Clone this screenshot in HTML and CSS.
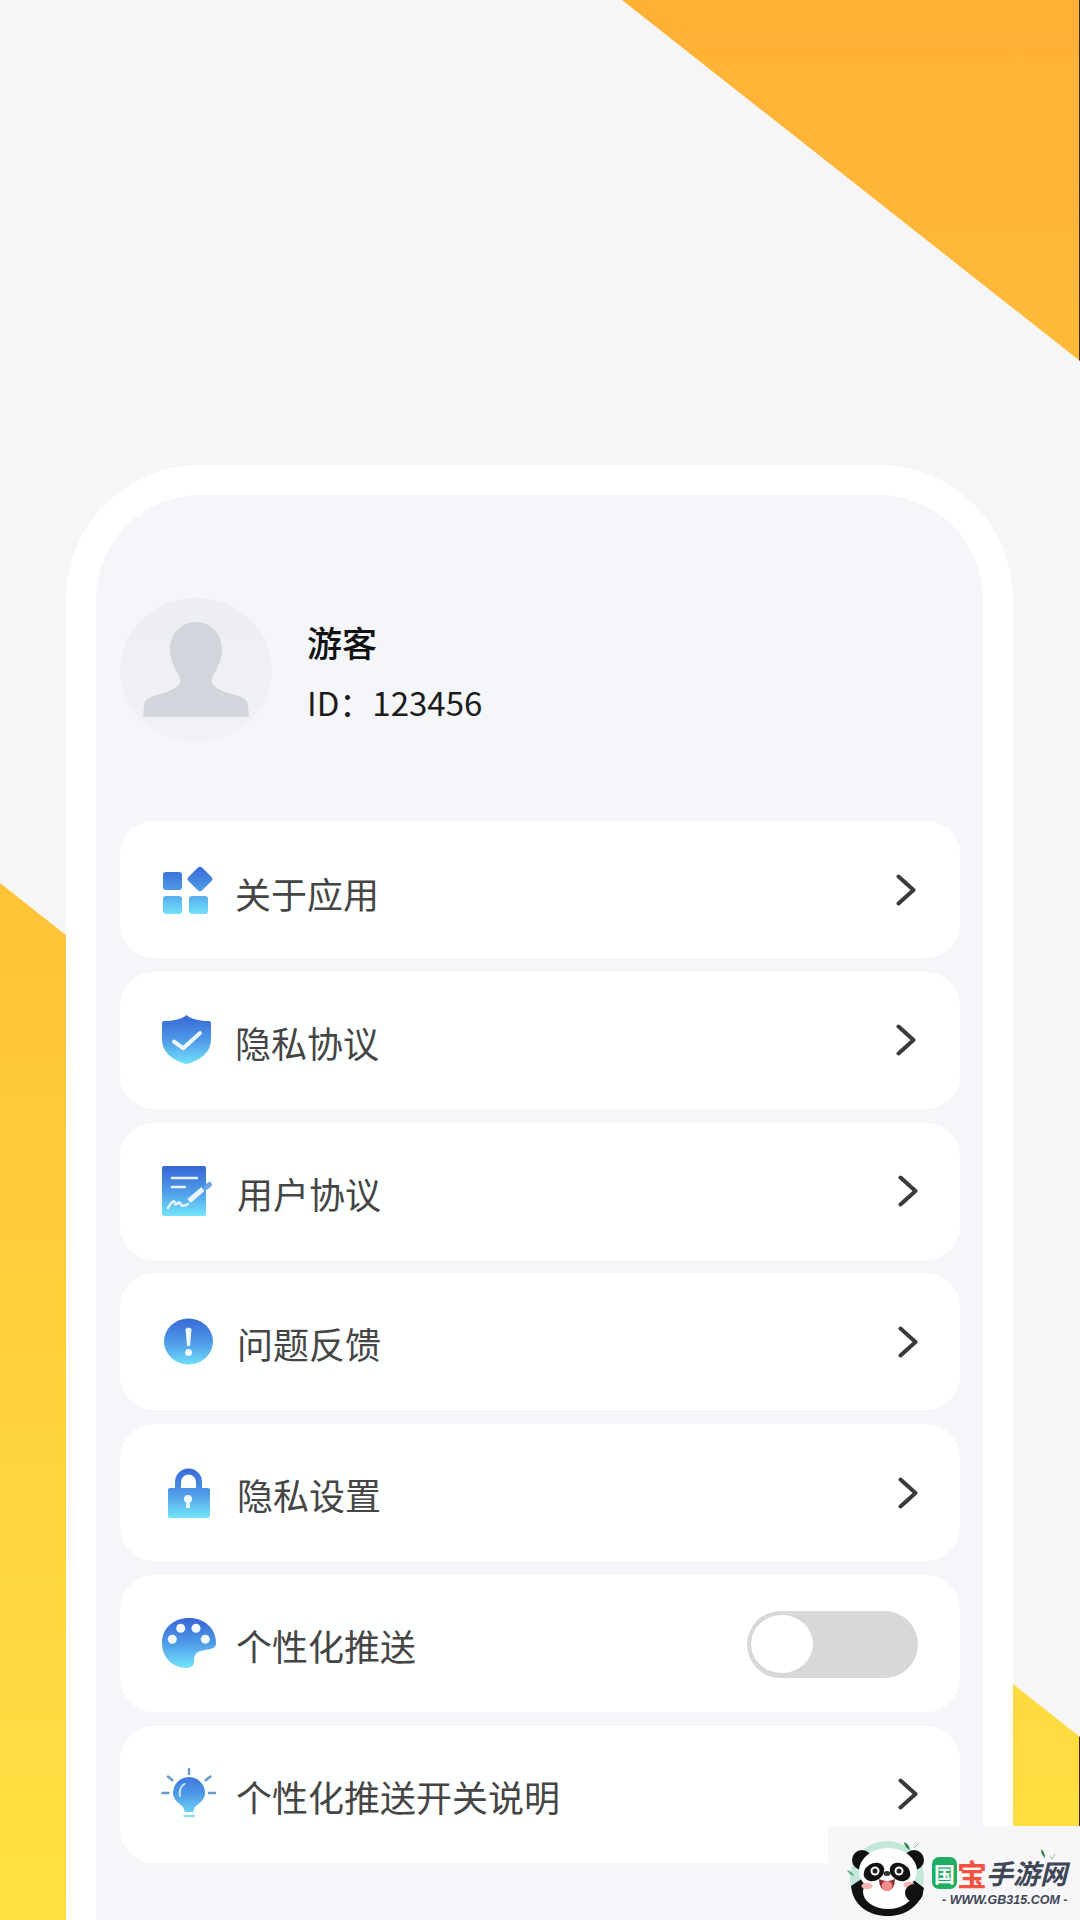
FILE: index.html
```html
<!DOCTYPE html>
<html lang="zh-CN">
<head>
    <meta charset="UTF-8">
    <meta name="viewport" content="width=device-width, initial-scale=1.0">
    <title>我的</title>
    <link rel="stylesheet" href="styles.css">
</head>
<body>
    <div class="deco deco-top"></div>
    <div class="deco deco-low"></div>

    <svg class="svg-defs" width="0" height="0">
        <defs>
            <linearGradient id="iconBlue" gradientUnits="userSpaceOnUse" x1="0" y1="4" x2="0" y2="53">
                <stop offset="0" stop-color="#3768d6"/>
                <stop offset="0.5" stop-color="#4f9be8"/>
                <stop offset="1" stop-color="#74e4fb"/>
            </linearGradient>
        </defs>
    </svg>

    <main class="phone">
        <section class="profile">
            <div class="avatar">
                <svg width="150" height="144" viewBox="0 1 150 144">
                    <path fill="#d2d6dc" d="M76 25C91 25 102 37 102 52C102 65 95 75 92 81C90 87 95 91 105 95C118 99 127 100 128 108L129 120H23L24 108C25 100 34 99 47 95C57 91 62 87 60 81C57 75 50 65 50 52C50 37 61 25 76 25Z"/>
                </svg>
            </div>
            <div class="profile-text">
                <div class="profile-name">游客</div>
                <div class="profile-id">ID：123456</div>
            </div>
        </section>

        <section class="menu">
            <div class="row row-first">
                <svg class="icon" viewBox="0 0 56 56">
                    <g fill="url(#iconBlue)">
                        <rect x="3" y="10" width="19" height="18" rx="3"/>
                        <rect x="3" y="34" width="19" height="18" rx="3"/>
                        <rect x="29" y="34" width="19" height="18" rx="3"/>
                        <path d="M38 5.500Q40 4 42 5.500L51.500 15Q53.500 17 51.500 19L42 28.500Q40 30 38 28.500L28.500 19Q26.500 17 28.500 15Z"/>
                    </g>
                </svg>
                <span class="label">关于应用</span>
                <svg class="chevron" viewBox="0 0 20 32"><path d="M2.500 2.500L17.500 16L2.500 29.500"/></svg>
            </div>

            <div class="row">
                <svg class="icon" viewBox="0 0 56 56">
                    <path fill="url(#iconBlue)" d="M26.500 3C22 7 14 9 4 9Q2 9 2 11V27C2 41 14 49 26.500 52C39 49 51 41 51 27V11Q51 9 49 9C39 9 31 7 26.500 3Z"/>
                    <path fill="none" stroke="#eef8ff" stroke-width="4" stroke-linecap="round" stroke-linejoin="round" d="M14 29.700L23.300 36.300L40 21"/>
                </svg>
                <span class="label">隐私协议</span>
                <svg class="chevron" viewBox="0 0 20 32"><path d="M2.500 2.500L17.500 16L2.500 29.500"/></svg>
            </div>

            <div class="row row-shift">
                <svg class="icon" viewBox="0 0 56 56">
                    <rect x="2" y="3" width="44" height="50" rx="2" fill="url(#iconBlue)"/>
                    <g fill="none" stroke="#e6f4ff" stroke-linecap="round">
                        <path stroke-width="2.500" d="M12 15H37"/>
                        <path stroke-width="2.500" d="M12 24H25"/>
                        <path stroke-width="2.500" d="M8 45C11 40 14 36 15 40C15 44 18 38 20 40C21 44 25 43 28 41"/>
                        <path stroke-width="5" stroke-linecap="butt" d="M29 38L43 26"/>
                    </g>
                    <path stroke="#6aa8e8" stroke-width="5" stroke-linecap="round" d="M46.500 24L49.500 21.500"/>
                </svg>
                <span class="label">用户协议</span>
                <svg class="chevron" viewBox="0 0 20 32"><path d="M2.500 2.500L17.500 16L2.500 29.500"/></svg>
            </div>

            <div class="row row-shift">
                <svg class="icon" viewBox="0 0 56 56">
                    <ellipse cx="28.500" cy="27.500" rx="24.500" ry="23" fill="url(#iconBlue)"/>
                    <path fill="#f0f8ff" d="M25.500 15Q28.500 12 31.500 15L30 32H27Z"/>
                    <circle cx="28.500" cy="38.500" r="3.500" fill="#f0f8ff"/>
                </svg>
                <span class="label">问题反馈</span>
                <svg class="chevron" viewBox="0 0 20 32"><path d="M2.500 2.500L17.500 16L2.500 29.500"/></svg>
            </div>

            <div class="row row-shift">
                <svg class="icon" viewBox="0 0 56 56">
                    <path fill="none" stroke="url(#iconBlue)" stroke-width="6" d="M18 25V17A10.500 10.500 0 0 1 39 17V25"/>
                    <rect x="8" y="23" width="42" height="30" rx="2" fill="url(#iconBlue)"/>
                    <circle cx="28" cy="34" r="4" fill="#f0f8ff"/>
                    <path fill="#f0f8ff" d="M26.500 35H29.500L30 43H26Z"/>
                </svg>
                <span class="label">隐私设置</span>
                <svg class="chevron" viewBox="0 0 20 32"><path d="M2.500 2.500L17.500 16L2.500 29.500"/></svg>
            </div>

            <div class="row row-wide">
                <svg class="icon" viewBox="0 0 56 56">
                    <path fill="url(#iconBlue)" d="M29 3C44 3 56 13 56 28C56 33 52 34 45 35C37 36 34 39 34 46C34 51 31 53 27 53C12 53 2 42 2 28C2 13 14 3 29 3Z"/>
                    <g fill="#f4fbff">
                        <circle cx="20.700" cy="13.300" r="4.500"/>
                        <circle cx="36" cy="13.300" r="4.500"/>
                        <circle cx="12.300" cy="24.300" r="4.500"/>
                        <circle cx="45.300" cy="24.300" r="4.500"/>
                    </g>
                </svg>
                <span class="label">个性化推送</span>
                <div class="toggle"><div class="knob"></div></div>
            </div>

            <div class="row row-wide">
                <svg class="icon" viewBox="0 0 56 56">
                    <g stroke="#6c9ccb" stroke-width="2.500" stroke-linecap="round">
                        <path d="M29 3V8"/>
                        <path d="M8 10.500L12.300 14.300"/>
                        <path d="M50.500 10.500L45.700 14.300"/>
                        <path d="M2.500 27H8.300"/>
                        <path d="M49 27H55.500"/>
                    </g>
                    <path fill="url(#iconBlue)" d="M29 11A16 16 0 0 1 45 27C45 34 39 37 35 41L33 46H25L23 41C19 37 13 34 13 27A16 16 0 0 1 29 11Z"/>
                    <path fill="none" stroke="#cfe9fb" stroke-width="2" stroke-linecap="round" d="M20 30C19 24 21 20 24.500 18"/>
                    <path stroke="#8fe0ee" stroke-width="2.500" stroke-linecap="round" d="M24.500 50H33.500"/>
                </svg>
                <span class="label">个性化推送开关说明</span>
                <svg class="chevron" viewBox="0 0 20 32"><path d="M2.500 2.500L17.500 16L2.500 29.500"/></svg>
            </div>
        </section>
    </main>

    <!-- site watermark, sits on top of the screenshot -->
    <aside class="mark">
        <svg class="panda" width="84" height="84" viewBox="6 6 84 84">
            <circle cx="48" cy="48" r="37" fill="#c4e8d8"/>
            <path fill="#111" d="M12 56C14 76 30 86 49 86C66 86 82 76 85 58L72 48H24Z"/>
            <ellipse cx="23" cy="30" rx="10" ry="10" fill="#111"/>
            <ellipse cx="75" cy="30" rx="10" ry="10" fill="#111"/>
            <ellipse cx="49" cy="62" rx="25" ry="17" fill="#fff"/>
            <ellipse cx="49" cy="41" rx="29" ry="23" fill="#fff"/>
            <ellipse cx="35" cy="42" rx="11" ry="8.500" fill="#111" transform="rotate(-32 35 42)"/>
            <ellipse cx="61" cy="42" rx="11" ry="8.500" fill="#111" transform="rotate(32 61 42)"/>
            <circle cx="36" cy="41" r="4.500" fill="#fff"/>
            <circle cx="60" cy="41" r="4.500" fill="#fff"/>
            <circle cx="36" cy="41" r="2.500" fill="#222"/>
            <circle cx="60" cy="41" r="2.500" fill="#222"/>
            <ellipse cx="48" cy="43.500" rx="3.500" ry="2.500" fill="#333"/>
            <path fill="#8d2f32" d="M40 49Q48 53 56 49Q56 60 48 61Q40 60 40 49Z"/>
            <ellipse cx="48" cy="56" rx="5.500" ry="5" fill="#f28c8c"/>
            <ellipse cx="28" cy="56" rx="5.500" ry="3.200" fill="#f7b5b2"/>
            <ellipse cx="70" cy="55" rx="5.500" ry="3.200" fill="#f7b5b2"/>
            <circle cx="75" cy="63" r="9" fill="#111"/>
            <path fill="#2f7d4f" d="M65 12Q70 14 71 20Q66 18 65 12Z"/>
            <path fill="none" stroke="#7fbf99" stroke-width="1" d="M75 18L80 13"/>
            <path fill="#5fae80" d="M8 40Q13 41 15 46Q10 45 8 40Z"/>
        </svg>
        <div class="mark-text">
            <div class="brand">
                <span class="brand-guo">国</span>
                <span class="brand-bao">宝</span>
                <span class="brand-rest">手游网</span>
            </div>
            <div class="brand-url">- WWW.GB315.COM -</div>
        </div>
        <svg class="mark-leaf" width="20" height="14" viewBox="0 0 20 14">
            <path fill="#2f7d4f" d="M2 1Q6 4 6 10Q2 7 2 1Z"/>
            <path fill="none" stroke="#a9cdb8" stroke-width="1.200" d="M11 8L13 11L16 6"/>
        </svg>
    </aside>
</body>
</html>
```

FILE: styles.css
```css
*{
    box-sizing: border-box;
}
body{
    margin: 0;
    height: 1920px;
    padding-top: 465px;
    overflow: hidden;
    position: relative;
    background-color: #f6f6f6;
    font-family: "Noto Sans CJK SC", "Noto Sans", sans-serif;
}
.deco{
    position: absolute;
    top: 0;
    left: 0;
    width: 1080px;
    height: 1920px;
    border-right: 1px solid #3a2a12;
}
.deco-top{
    background: linear-gradient(180deg, #ffb136 0, #ffba3a 360px);
    clip-path: polygon(622px 0, 1080px 361px, 1080px 0);
}
.deco-low{
    background: linear-gradient(180deg, #ffc338 883px, #ffe141 1920px);
    clip-path: polygon(0 883px, 1080px 1737px, 1080px 1920px, 0 1920px);
}
.svg-defs{
    position: absolute;
}
.phone{
    position: relative;
    width: 947px;
    height: 1455px;
    margin-left: 66px;
    padding: 102px 23px 0 24px;
    border: 30px solid #fff;
    border-bottom: none;
    border-radius: 134px 134px 0 0;
    background-color: #f4f6fa;
}
.profile{
    display: flex;
    align-items: flex-start;
    gap: 35px;
    height: 148px;
    margin-bottom: 76px;
}
.avatar{
    width: 152px;
    height: 144px;
    margin-top: 1px;
    border-radius: 50%;
    background: linear-gradient(180deg, #eceef1, #f0f2f5);
}
.avatar svg{
    display: block;
}
.profile-text{
    display: flex;
    flex-direction: column;
    gap: 24px;
    padding-top: 27px;
}
.profile-name{
    font-size: 35px;
    line-height: 36px;
    font-weight: 500;
    color: #111;
}
.profile-id{
    font-size: 33px;
    line-height: 36px;
    color: #1c1c1c;
}
.menu{
    display: flex;
    flex-direction: column;
    gap: 13.8px;
}
.row{
    display: flex;
    align-items: center;
    height: 137px;
    padding: 0 44px 0 40px;
    background-color: #feffff;
    border-radius: 34px;
}
.row-first .label{
    padding-top: 6px;
}
.row-shift{
    padding-right: 42px;
}
.row-shift .label{
    margin-left: 21px;
}
.row-wide{
    padding-right: 42px;
}
.row-wide .label{
    margin-left: 20px;
}
.icon{
    flex: none;
    width: 56px;
    height: 56px;
}
.label{
    margin-left: 19px;
    padding-top: 3px;
    font-size: 36px;
    line-height: 40px;
    color: #454545;
}
.chevron{
    flex: none;
    width: 20px;
    height: 32px;
    margin-left: auto;
    fill: none;
    stroke: #3a3a3a;
    stroke-width: 4;
    stroke-linecap: round;
    stroke-linejoin: round;
}
.toggle{
    display: flex;
    align-items: center;
    width: 171px;
    height: 67px;
    margin-left: auto;
    margin-top: 2px;
    padding: 0 4px;
    border-radius: 34px;
    background-color: #d8d8d8;
}
.knob{
    width: 62px;
    height: 58px;
    border-radius: 50%;
    background-color: #fff;
}
.mark{
    position: absolute;
    right: 0;
    bottom: 0;
    display: flex;
    align-items: flex-start;
    gap: 3px;
    width: 252px;
    height: 94px;
    padding: 10px 0 0 17px;
    background-color: #f7f7f9;
}
.panda{
    flex: none;
}
.mark-text{
    display: flex;
    flex-direction: column;
    align-items: flex-start;
    margin-top: 20px;
}
.brand{
    display: flex;
    align-items: center;
    height: 34px;
    font-weight: 700;
}
.brand-guo{
    width: 25px;
    height: 32px;
    border-radius: 7px;
    background-color: #1fae5f;
    color: #fff;
    font-size: 21px;
    line-height: 32px;
    text-align: center;
}
.brand-bao{
    width: 29px;
    font-size: 30px;
    line-height: 34px;
    color: #f4533f;
    text-align: center;
}
.brand-rest{
    font-size: 27px;
    line-height: 34px;
    font-style: italic;
    color: #3f4655;
}
.brand-url{
    margin: 3px 0 0 10px;
    font-family: "Liberation Sans", sans-serif;
    font-size: 12.5px;
    line-height: 15px;
    font-style: italic;
    font-weight: 700;
    white-space: nowrap;
    color: #3f4655;
}
.mark-leaf{
    position: absolute;
    top: 22px;
    right: 21px;
}
```
